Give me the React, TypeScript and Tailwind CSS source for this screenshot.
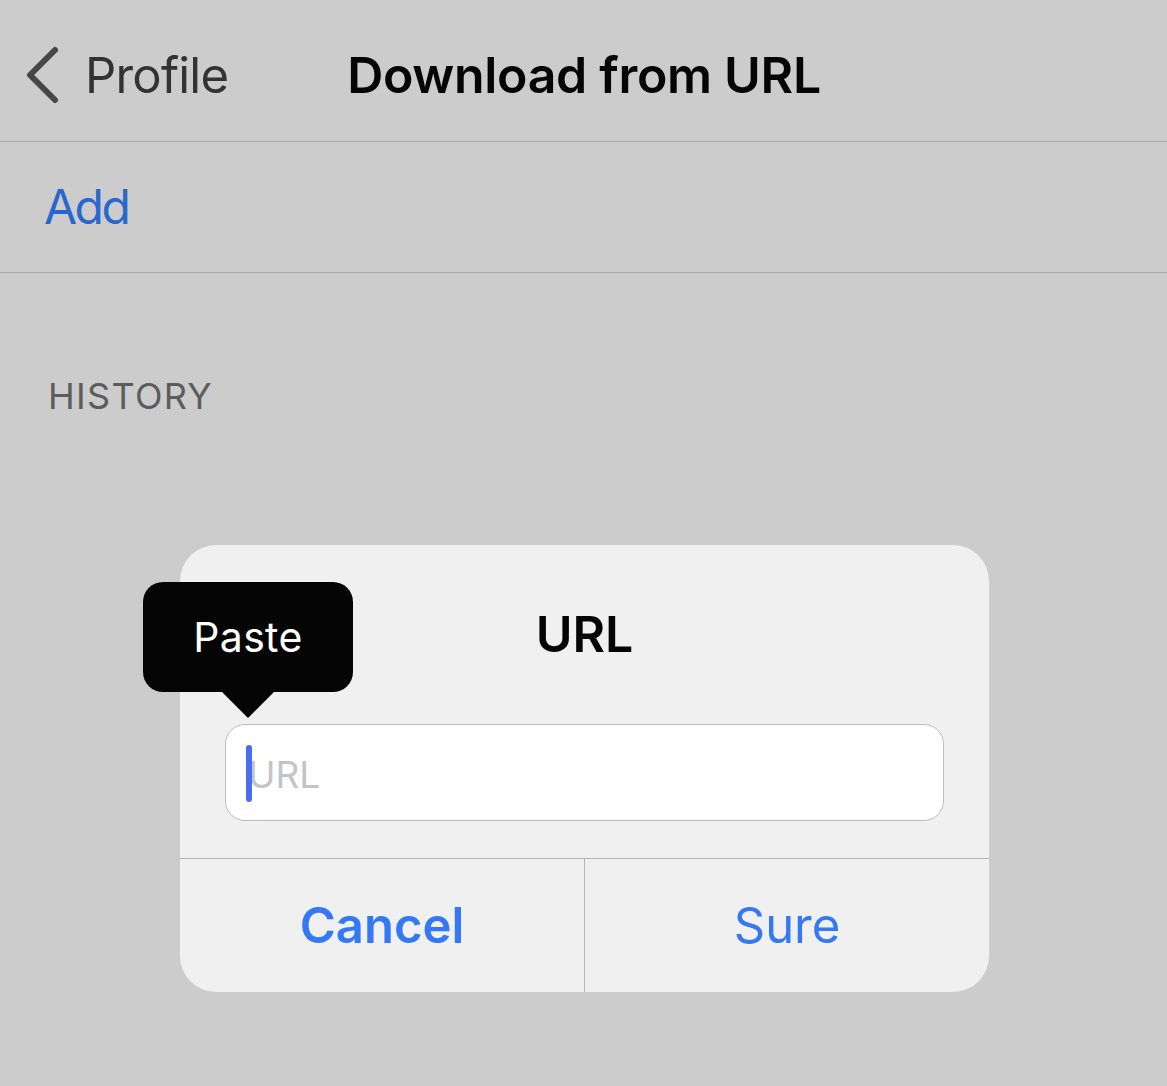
import React from 'react';

const FONT = { fontFamily: 'Inter, "Liberation Sans", sans-serif' };

function BackChevron() {
    return (
        <svg width="40" height="64" viewBox="20 43 40 64" fill="none">
            <path d="M55 50 L30 75 L55 100" stroke="#474747" strokeWidth="6" strokeLinecap="round" strokeLinejoin="round" />
        </svg>
    );
}

export default function App() {
    return (
        <div className="w-full min-h-[1086px] bg-[#cccccc] relative overflow-hidden" style={FONT}>
            {/* Nav bar */}
            <div className="h-[142px] border-b border-[#a9a9a9] relative flex items-center justify-center pt-[9px]">
                <div className="absolute left-[20px] top-[43px] flex items-center">
                    <BackChevron />
                    <span className="ml-[25px] text-[49px] leading-none text-[#333333] tracking-[-0.8px]">Profile</span>
                </div>
                <h1 className="text-[50px] leading-none font-semibold text-[#050505] tracking-[-0.3px] pl-[1px]">Download from URL</h1>
            </div>

            {/* Add row */}
            <div className="h-[131px] border-b border-[#a9a9a9] flex items-center pl-[44px]">
                <span className="text-[48px] leading-none text-[#2a67cc] tracking-[-2.5px]">Add</span>
            </div>

            {/* History header */}
            <div className="pt-[105px] pl-[48px]">
                <span className="text-[36px] leading-none text-[#5c5c5c] tracking-[1.3px]">HISTORY</span>
            </div>

            {/* Alert dialog */}
            <div className="absolute left-[180px] top-[545px] w-[809px] h-[447px] bg-[#f0f0f0] rounded-[36px] flex flex-col">
                <div className="pt-[64px] flex justify-center">
                    <span className="text-[50px] leading-none font-semibold text-[#050505]">URL</span>
                </div>
                <div className="mt-[65px] mx-[45px] h-[97px] bg-white border border-[#bdbdbd] rounded-[20px] relative flex items-center pl-[22px]">
                    <span className="text-[37px] leading-none text-[#c4c4c4] pt-[4px]">URL</span>
                    <span className="absolute left-[20px] top-[20px] w-[6px] h-[57px] rounded-full bg-[#4a6cf0]"></span>
                </div>
                <div className="mt-[37px] border-t border-[#b5b5b5] grid grid-cols-[404px_1fr] flex-1">
                    <button className="flex items-center justify-center text-[49px] leading-none font-semibold text-[#3478f6]">Cancel</button>
                    <button className="flex items-center justify-center text-[49px] leading-none text-[#3478f6] border-l border-[#b5b5b5]">Sure</button>
                </div>
            </div>

            {/* Paste callout */}
            <div className="absolute left-[143px] top-[582px] flex flex-col items-center w-[210px]">
                <div className="w-[210px] h-[110px] bg-[#050505] rounded-[20px] flex items-center justify-center">
                    <span className="text-[41px] leading-none text-white tracking-[0.3px]">Paste</span>
                </div>
                <svg width="54" height="27" viewBox="0 0 54 27" className="-mt-px">
                    <path d="M0 0 L54 0 L27 27 Z" fill="#050505" />
                </svg>
            </div>
        </div>
    );
}
